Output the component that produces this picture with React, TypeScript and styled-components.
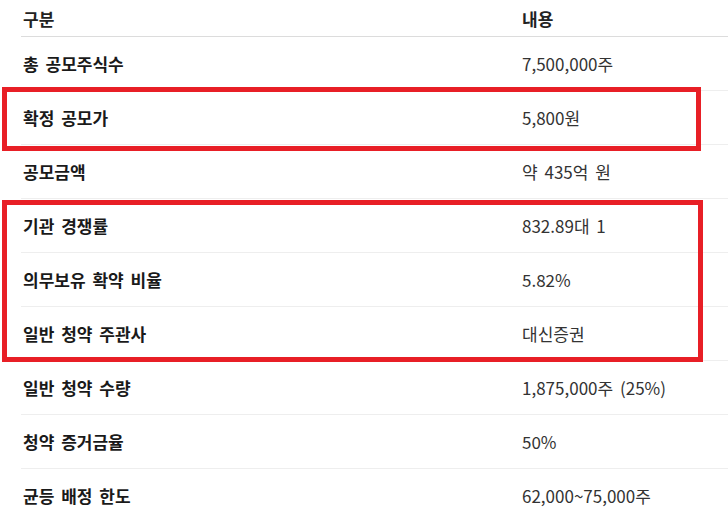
import React from "react";
import styled, { createGlobalStyle } from "styled-components";

const GlobalStyle = createGlobalStyle`
  body {
    margin: 0;
    background: #ffffff;
    font-family: "Noto Sans CJK KR", "Noto Sans", sans-serif;
    overflow: hidden;
  }
`;

const Page = styled.div`
  position: relative;
  width: 728px;
  height: 513px;
  overflow: hidden;
  background: #ffffff;
`;

const Table = styled.table`
  margin-left: 21px;
  width: 740px;
  border-collapse: collapse;
  font-size: 17px;
  color: #222222;
  word-spacing: 3px;
`;

const HeadCell = styled.th<{ $w?: number }>`
  text-align: left;
  font-weight: 700;
  height: 36px;
  padding: 0 0 0 2px;
  vertical-align: middle;
  border-bottom: 1px solid #dcdcdc;
  width: ${(p) => (p.$w ? `${p.$w}px` : "auto")};
`;

const Row = styled.tr`
  border-bottom: 1px solid #eeeeee;
`;

const Cell = styled.td<{ $bold?: boolean }>`
  height: 53px;
  padding: 0 0 0 2px;
  vertical-align: middle;
  font-weight: ${(p) => (p.$bold ? 600 : 400)};
  color: ${(p) => (p.$bold ? "#1a1a1a" : "#333333")};
`;

const Highlight = styled.div<{ $top: number; $width: number; $height: number }>`
  position: absolute;
  left: 2px;
  top: ${(p) => p.$top}px;
  width: ${(p) => p.$width}px;
  height: ${(p) => p.$height}px;
  border: 5px solid #e81f26;
  box-sizing: border-box;
  pointer-events: none;
`;

const rows: [string, string][] = [
  ["총 공모주식수", "7,500,000주"],
  ["확정 공모가", "5,800원"],
  ["공모금액", "약 435억 원"],
  ["기관 경쟁률", "832.89대 1"],
  ["의무보유 확약 비율", "5.82%"],
  ["일반 청약 주관사", "대신증권"],
  ["일반 청약 수량", "1,875,000주 (25%)"],
  ["청약 증거금율", "50%"],
  ["균등 배정 한도", "62,000~75,000주"],
];

export default function App() {
  return (
    <>
      <GlobalStyle />
      <Page>
        <Table>
          <thead>
            <tr>
              <HeadCell $w={497}>구분</HeadCell>
              <HeadCell>내용</HeadCell>
            </tr>
          </thead>
          <tbody>
            {rows.map(([label, value]) => (
              <Row key={label}>
                <Cell $bold>{label}</Cell>
                <Cell>{value}</Cell>
              </Row>
            ))}
          </tbody>
        </Table>
        <Highlight $top={87} $width={699} $height={64} />
        <Highlight $top={200} $width={701} $height={162} />
      </Page>
    </>
  );
}
